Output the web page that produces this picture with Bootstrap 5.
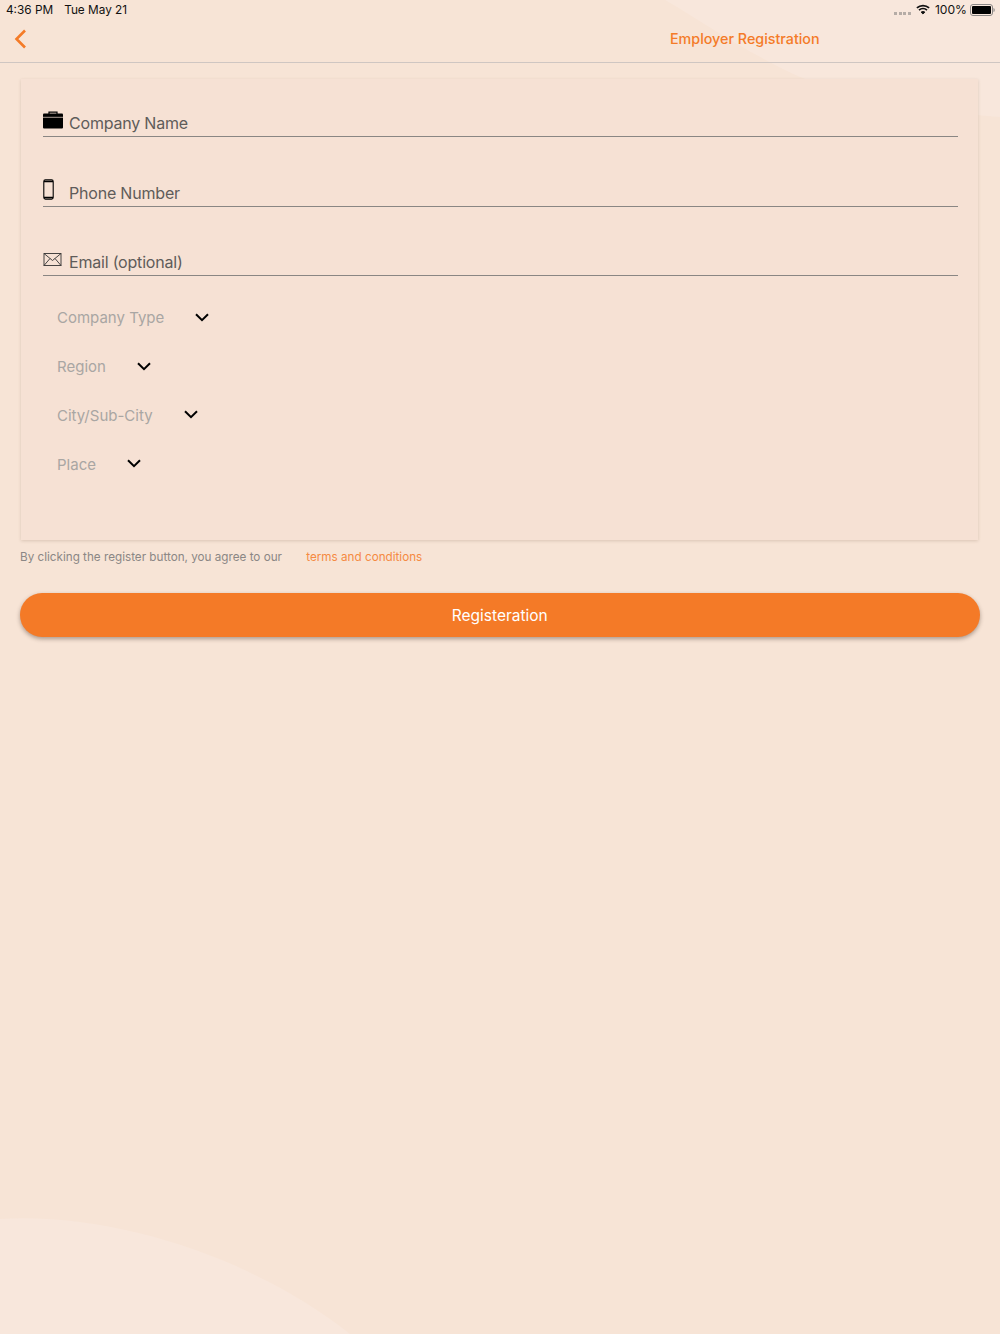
<!DOCTYPE html>
<html lang="en">
<head>
    <meta charset="UTF-8">
    <meta name="viewport" content="width=device-width, initial-scale=1">
    <title>Employer Registration</title>
    <link href="https://cdn.jsdelivr.net/npm/bootstrap@5.3.0/dist/css/bootstrap.min.css" rel="stylesheet">
    <script src="https://cdn.jsdelivr.net/npm/bootstrap@5.3.0/dist/js/bootstrap.bundle.min.js"></script>
    <style>
        html, body { height: 1334px; }
        body {
            background-color: #f7e4d6;
            font-family: Inter, "Liberation Sans", sans-serif;
            position: relative;
            overflow: hidden;
        }
        .bg-shape { position: absolute; left: 0; top: 0; width: 1000px; height: 1334px; }
        .page-wrap { position: relative; }
        .status-bar { height: 20px; padding: 0 5px 0 6px; font-size: 11.8px; color: #111; line-height: 20px; }
        .status-date { margin-left: 11px; }
        .signal-dots { gap: 1.6px; margin-right: 5px; margin-top: 12px; }
        .signal-dots i { width: 3px; height: 3px; background: #b5aca6; display: block; }
        .battery-pct { font-size: 12.1px; margin-left: 5px; margin-right: 3px; }
        .top-nav { height: 43px; border-bottom: 1px solid #cfc6c2; position: relative; }
        .top-title { font-size: 14.3px; font-weight: 500; color: #f47b28; position: absolute; left: 670px; top: 8px; }
        .back-link { position: absolute; left: 14px; top: 9px; line-height: 0; }
        .form-panel {
            background: #f6e1d4;
            margin: 16px 22px 0 21px;
            height: 461px;
            padding: 0 20px 0 22px;
            box-shadow: 0 1px 3px rgba(120, 90, 70, .22);
        }
        .field-row { height: 69.5px; border-bottom: 1px solid #8a8683; padding-bottom: 1px; position: relative; }
        .field-row:first-child { height: 58px; }
        .field-icon { position: absolute; left: 0; }
        .field-text { font-size: 16px; letter-spacing: -.2px; color: #5f5c5a; margin-left: 26px; line-height: 24px; }
        .picker-row { height: 48.8px; padding-left: 14px; gap: 31px; font-size: 15px; color: #a9a6a3; }
        .picker-row span { margin-top: 2px; }
        .picker-list { padding-top: 17px; }
        .terms-line { font-size: 11.7px; margin: 8px 0 0 20px; color: #8b8785; line-height: 18px; }
        .terms-link { color: #f58a42; margin-left: 21px; text-decoration: none; }
        .register-btn {
            display: block;
            width: 960.5px;
            height: 44px;
            margin: 27px 0 0 19.5px;
            padding-top: 2px;
            border-radius: 22px;
            border: 0;
            background: #f47a27;
            color: #fff;
            font-size: 15.5px;
            box-shadow: 0 2px 4px rgba(60, 40, 30, .4);
        }
    </style>
</head>
<body>
    <svg class="bg-shape" viewBox="0 0 1000 1334">
        <!-- pale curves top right and bottom left -->
        <path d="M665 0C700 20 745 52 800 77C860 100 930 112 1000 117L1000 0Z" fill="#f8e7dc"/>
        <path d="M0 1219C120 1212 260 1262 350 1334L0 1334Z" fill="#f8e7dc"/>
    </svg>

    <div class="page-wrap">
        <div class="status-bar d-flex justify-content-between">
            <div><span>4:36 PM</span><span class="status-date">Tue May 21</span></div>
            <div class="d-flex align-items-start">
                <div class="signal-dots d-flex"><i></i><i></i><i></i><i></i></div>
                <svg class="mt-1" width="14" height="11" viewBox="0 0 16 12" fill="none" stroke="#111">
                    <path d="M1 4.2C5 .6 11 .6 15 4.2" stroke-width="1.9"/>
                    <path d="M3.4 6.6C6 4.4 10 4.4 12.6 6.6" stroke-width="1.9"/>
                    <path d="M5.8 9C7 8 9 8 10.2 9L8 11.2Z" fill="#111" stroke-width="1"/>
                </svg>
                <span class="battery-pct">100%</span>
                <svg class="mt-1" width="25" height="12" viewBox="0 0 25 12">
                    <rect x=".5" y=".5" width="22" height="11" rx="2.5" fill="none" stroke="#8b8785"/>
                    <rect x="2" y="2" width="19" height="8" rx="1" fill="#000"/>
                    <path d="M23.5 4v4c.8 0 1.2-1 1.2-2s-.4-2-1.2-2z" fill="#8b8785"/>
                </svg>
            </div>
        </div>

        <div class="top-nav">
            <a class="back-link" href="#">
                <svg width="13" height="20" viewBox="0 0 13 20" fill="none" stroke="#f47b28" stroke-width="2.6">
                    <path d="M11 1.5 2.5 10 11 18.5"/>
                </svg>
            </a>
            <span class="top-title">Employer Registration</span>
        </div>

        <div class="form-panel">
            <div>
                <div class="field-row d-flex align-items-end">
                    <svg class="field-icon" style="top:32px" width="20" height="18" viewBox="0 0 20 18">
                        <path d="M6 3V1.2h8V3" fill="none" stroke="#000" stroke-width="1.2"/>
                        <rect x="0" y="2.5" width="20" height="15" rx="1" fill="#000"/>
                        <path d="M0 6.3h20" stroke="#f6e1d4" stroke-width=".7"/>
                    </svg>
                    <span class="field-text">Company Name</span>
                </div>
                <div class="field-row d-flex align-items-end">
                    <svg class="field-icon" style="top:42px" width="11" height="21" viewBox="0 0 11 21">
                        <rect x=".8" y=".8" width="9.4" height="19.4" rx="1.6" fill="none" stroke="#000" stroke-width="1.1"/>
                        <path d="M1 2.4h9M1 18.6h9" stroke="#000" stroke-width="1.6"/>
                    </svg>
                    <span class="field-text">Phone Number</span>
                </div>
                <div class="field-row d-flex align-items-end">
                    <svg class="field-icon" style="top:46px" width="19" height="13" viewBox="0 0 18 13" fill="none" stroke="#333" stroke-width=".9">
                        <rect x=".5" y=".5" width="17" height="12"/>
                        <path d="M.5 .5 9 7.5 17.5 .5M.5 12.5 6.5 5.5M17.5 12.5 11.5 5.5"/>
                    </svg>
                    <span class="field-text">Email (optional)</span>
                </div>
            </div>

            <div class="picker-list">
                <div class="picker-row d-flex align-items-center">
                    <span>Company Type</span>
                    <svg width="14" height="9" viewBox="0 0 14 9" fill="none" stroke="#000" stroke-width="2"><path d="M1 1.2 7 7.2 13 1.2"/></svg>
                </div>
                <div class="picker-row d-flex align-items-center">
                    <span>Region</span>
                    <svg width="14" height="9" viewBox="0 0 14 9" fill="none" stroke="#000" stroke-width="2"><path d="M1 1.2 7 7.2 13 1.2"/></svg>
                </div>
                <div class="picker-row d-flex align-items-center">
                    <span>City/Sub-City</span>
                    <svg width="14" height="9" viewBox="0 0 14 9" fill="none" stroke="#000" stroke-width="2"><path d="M1 1.2 7 7.2 13 1.2"/></svg>
                </div>
                <div class="picker-row d-flex align-items-center">
                    <span>Place</span>
                    <svg width="14" height="9" viewBox="0 0 14 9" fill="none" stroke="#000" stroke-width="2"><path d="M1 1.2 7 7.2 13 1.2"/></svg>
                </div>
            </div>
        </div>

        <div class="terms-line">By clicking the register button, you agree to our <a class="terms-link" href="#">terms and conditions</a></div>

        <button class="register-btn" type="button">Registeration</button>
    </div>
</body>
</html>
